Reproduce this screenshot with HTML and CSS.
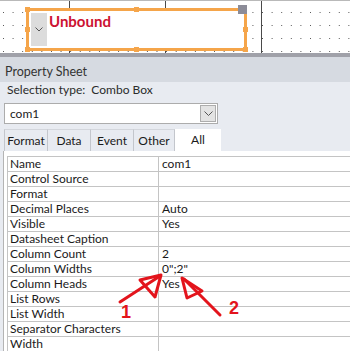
FILE: index.html
```html
<!DOCTYPE html>
<html>
<head>
<meta charset="utf-8">
<link rel="stylesheet" href="styles.css">
</head>
<body>
<div class="canvas">
  <div class="combo">
    <div class="combo-btn">
      <svg width="8" height="5" viewBox="0 0 8 5"><path d="M0.5 0.5 L4 4 L7.5 0.5" fill="none" stroke="#555" stroke-width="1"/></svg>
    </div>
    <span class="unbound">Unbound</span>
    <span class="handle h-tl"></span>
    <span class="handle h-ml"></span>
    <span class="handle h-bl"></span>
    <span class="handle h-tm"></span>
    <span class="handle h-bm"></span>
    <span class="handle h-mr"></span>
    <span class="handle h-br"></span>
    <span class="grip"></span>
  </div>
</div>
<div class="sep"></div>
<div class="sheet">
  <div class="sheet-title">Property Sheet</div>
  <div class="sheet-body">
    <div class="sel">Selection type:&nbsp; Combo Box</div>
    <div class="picker">
      <span class="picker-text">com1</span>
      <span class="picker-btn">
        <svg width="9" height="5" viewBox="0 0 9 5"><path d="M0.5 0.5 L4.5 4.5 L8.5 0.5" fill="none" stroke="#555" stroke-width="1"/></svg>
      </span>
    </div>
    <div class="tabs">
      <span class="tab t-format">Format</span>
      <span class="tab t-data">Data</span>
      <span class="tab t-event">Event</span>
      <span class="tab t-other">Other</span>
      <span class="tab tab-active">All</span>
    </div>
    <div class="panel">
      <div class="grid">
        <div class="lbl">Name</div><div class="val">com1</div>
        <div class="lbl">Control Source</div><div class="val"></div>
        <div class="lbl">Format</div><div class="val"></div>
        <div class="lbl">Decimal Places</div><div class="val">Auto</div>
        <div class="lbl">Visible</div><div class="val">Yes</div>
        <div class="lbl">Datasheet Caption</div><div class="val"></div>
        <div class="lbl">Column Count</div><div class="val">2</div>
        <div class="lbl">Column Widths</div><div class="val">0";2"</div>
        <div class="lbl">Column Heads</div><div class="val">Yes</div>
        <div class="lbl">List Rows</div><div class="val"></div>
        <div class="lbl">List Width</div><div class="val"></div>
        <div class="lbl">Separator Characters</div><div class="val"></div>
        <div class="lbl">Width</div><div class="val"></div>
      </div>
    </div>
  </div>
</div>
<svg class="annot" width="350" height="351" viewBox="0 0 350 351">
  <g fill="none" stroke="#e3141c" stroke-width="3" stroke-linejoin="round" stroke-linecap="round">
    <path d="M120 302 L160 276"/>
    <path d="M161 275 L140 280 L155 297 Z"/>
    <path d="M220 315 L184 279"/>
    <path d="M182 278 L187 298 L202 291 Z"/>
  </g>
  <text class="num" x="121" y="318">1</text>
  <text class="num" x="229" y="314">2</text>
</svg>
</body>
</html>
```

FILE: styles.css
```css
* { box-sizing: border-box; }

html, body {
  margin: 0;
  padding: 0;
}

body {
  width: 350px;
  height: 351px;
  overflow: hidden;
  position: relative;
  font-family: Lato, "Liberation Sans", sans-serif;
  font-size: 12px;
  color: #1a1a1a;
  background: #e8ebf1;
}

/* ---------- design canvas ---------- */
.canvas {
  position: relative;
  height: 53px;
  border-top: 1px solid #b9b9b9;
  background-color: #ffffff;
  background-image:
    repeating-linear-gradient(to right, transparent 0 69px, #4a4a4a 69px 70px, transparent 70px 96px),
    conic-gradient(from 270deg at 1px 1px, #555555 90deg, transparent 0);
  background-size: auto, 9.6px 13px;
  background-position: 0 0, 3px 11px;
}

.combo {
  position: absolute;
  left: 26px;
  top: 7px;
  width: 221px;
  height: 43px;
  border: 3px solid #f5a54a;
  background: #ffffff;
  display: flex;
  align-items: flex-start;
}

.combo-btn {
  width: 16px;
  height: 33px;
  margin: 2px 0 0 2px;
  background: #dcdcdc;
  display: flex;
  align-items: center;
  justify-content: center;
}

.unbound {
  margin: 1px 0 0 2px;
  font-family: Lato, "Liberation Sans", sans-serif;
  font-weight: 700;
  font-size: 15px;
  line-height: 18px;
  color: #cc1231;
}

.handle {
  position: absolute;
  width: 5px;
  height: 5px;
  background: #f5a54a;
}
.h-tl { left: -4px; top: -4px; }
.h-ml { left: -4px; top: 16px; }
.h-bl { left: -4px; bottom: -4px; }
.h-tm { left: 105px; top: -4px; }
.h-bm { left: 105px; bottom: -4px; }
.h-mr { right: -4px; top: 16px; }
.h-br { right: -4px; bottom: -4px; }

.grip {
  position: absolute;
  right: -3px;
  top: -6px;
  width: 9px;
  height: 9px;
  background: #8c8c98;
}

.sep {
  height: 4px;
  background: #a0a1a9;
}

/* ---------- property sheet ---------- */
.sheet-title {
  height: 25px;
  padding: 7px 0 0 5px;
  background: #d6dae1;
  font-size: 12.5px;
  line-height: 16px;
  color: #333333;
}

.sheet-body {
  background: #e8ebf1;
}

.sel {
  padding-left: 7px;
  line-height: 16px;
  color: #2b2b2b;
}

.picker {
  margin: 5px 0 0 4px;
  width: 214px;
  height: 21px;
  border: 1px solid #acacac;
  background: #ffffff;
  display: flex;
  align-items: center;
}

.picker-text {
  flex: 1;
  padding-left: 5px;
  color: #1a1a1a;
}

.picker-btn {
  width: 16px;
  height: 17px;
  margin-right: 1px;
  border: 1px solid #adadad;
  background: #e3e3e3;
  display: flex;
  align-items: center;
  justify-content: center;
}

.tabs {
  margin: 5px 0 0 4px;
  height: 22px;
  display: flex;
}

.tab {
  height: 22px;
  line-height: 21px;
  text-align: center;
  color: #1a1a1a;
  border-top: 1px solid #d3d6dc;
  border-right: 1px solid #c3c6cc;
}
.t-format { width: 44px; border-left: 1px solid #c3c6cc; }
.t-data { width: 43px; }
.t-event { width: 43px; }
.t-other { width: 41px; }
.tab-active {
  width: 46px;
  background: #ffffff;
  border-top: none;
  border-right: none;
}

.panel {
  margin-left: 3px;
  height: 200px;
  padding: 5px 0 0 3px;
  border-left: 1px solid #b4b4b4;
  background: #ffffff;
}

.grid {
  display: grid;
  grid-template-columns: 151px 1fr;
  border-top: 1px solid #c4c4c4;
  border-left: 1px solid #c4c4c4;
}

.lbl, .val {
  height: 15px;
  line-height: 14px;
  border-bottom: 1px solid #c4c4c4;
  white-space: nowrap;
}

.lbl {
  padding-left: 2px;
  border-right: 1px solid #c4c4c4;
}

.val {
  padding-left: 3px;
}

/* ---------- annotations ---------- */
.annot {
  position: absolute;
  left: 0;
  top: 0;
  pointer-events: none;
}

.num {
  font-family: "Liberation Sans", Arial, sans-serif;
  font-weight: 700;
  font-size: 18px;
  fill: #e3141c;
}
```
